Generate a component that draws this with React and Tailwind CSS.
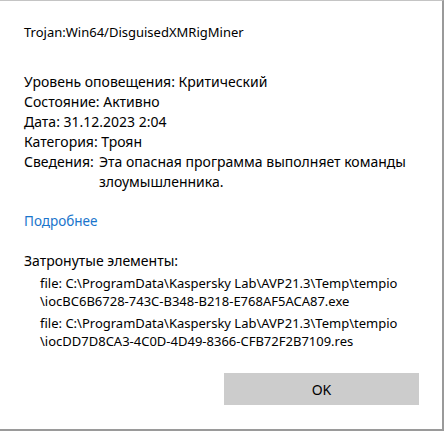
export default function App() {
  const font = { fontFamily: '"Noto Sans", "Open Sans", sans-serif' };
  return (
    <div className="w-[445px] h-[431px] bg-white">
      <div
        className="w-[444px] h-[431px] bg-white border-t border-t-[#c4c4c4] border-r-2 border-r-[#9a9a9a] border-b-2 border-b-[#9a9a9a] flex flex-col text-black"
        style={font}
      >
        <div className="pl-[24px] pt-[21px] text-[13px] leading-[20px]">Trojan:Win64/DisguisedXMRigMiner</div>
        <div className="pl-[24px] pt-[30px] text-[14px] leading-[20px]">
          <div>Уровень оповещения: Критический</div>
          <div>Состояние: Активно</div>
          <div>Дата: 31.12.2023 2:04</div>
          <div>Категория: Троян</div>
          <div className="flex">
            <span className="w-[75px] shrink-0">Сведения:</span>
            <span className="w-[330px]">Эта опасная программа выполняет команды злоумышленника.</span>
          </div>
        </div>
        <div className="pl-[24px] pt-[19px] text-[13.5px] leading-[20px] text-[#1a75cc]">Подробнее</div>
        <div className="pl-[24px] pt-[20px] text-[14px] leading-[20px]">Затронутые элементы:</div>
        <div className="pl-[40px] pt-[3px] text-[13px] leading-[18px] flex flex-col gap-[4px]">
          <div>
            <div>file: C:\ProgramData\Kaspersky Lab\AVP21.3\Temp\tempio</div>
            <div>\iocBC6B6728-743C-B348-B218-E768AF5ACA87.exe</div>
          </div>
          <div>
            <div>file: C:\ProgramData\Kaspersky Lab\AVP21.3\Temp\tempio</div>
            <div>\iocDD7D8CA3-4C0D-4D49-8366-CFB72F2B7109.res</div>
          </div>
        </div>
        <div className="flex justify-end pr-[23px] pt-[23px]">
          <button className="w-[195px] h-[32px] bg-[#cccccc] text-[14px] text-black">OK</button>
        </div>
      </div>
    </div>
  );
}
